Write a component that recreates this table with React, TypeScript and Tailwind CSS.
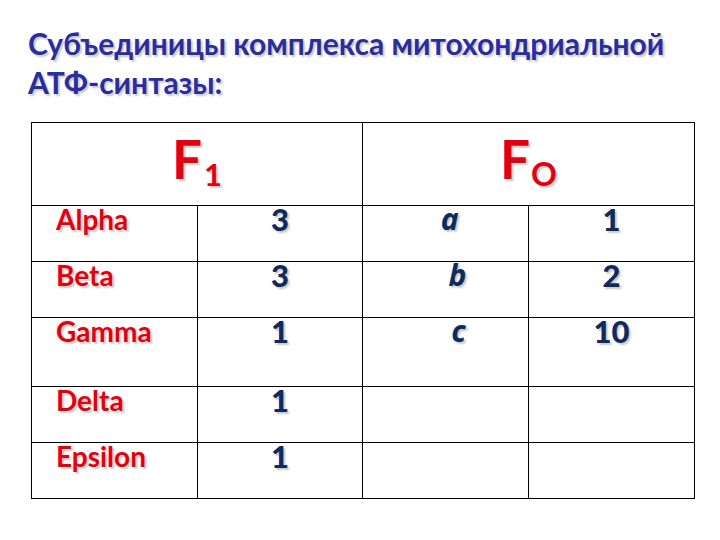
import React from "react";

const shadow = "[text-shadow:2px_2px_2px_rgba(0,0,0,0.22)]";

type Row = {
  name: string;
  f1: string;
  fo?: string;
  foPad?: string;
  count?: string;
  tall?: boolean;
};

const rows: Row[] = [
  { name: "Alpha", f1: "3", fo: "a", foPad: "pl-[8px]", count: "1" },
  { name: "Beta", f1: "3", fo: "b", foPad: "pl-[24px]", count: "2" },
  { name: "Gamma", f1: "1", fo: "c", foPad: "pl-[26px]", count: "10", tall: true },
  { name: "Delta", f1: "1" },
  { name: "Epsilon", f1: "1" },
];

export default function App() {
  return (
    <div className="w-[720px] h-[540px] bg-white overflow-hidden font-['Lato','Noto_Sans',sans-serif]">
      <h1
        className={`pl-[28px] pt-[24px] text-[30px] leading-[39px] font-bold text-[#2b2d9c] ${shadow}`}
      >
        Субъединицы комплекса митохондриальной
        <br />
        АТФ-синтазы:
      </h1>

      <table className="ml-[31px] mt-[20px] w-[664px] border-collapse table-fixed">
        <colgroup>
          <col className="w-[166px]" />
          <col className="w-[165px]" />
          <col className="w-[166px]" />
          <col className="w-[166px]" />
        </colgroup>
        <tbody>
          <tr className="h-[83px]">
            <td colSpan={2} className="border-[1.5px] border-black align-top p-0">
              <div className={`flex justify-center pt-[9px] text-[#e3000f] font-bold leading-none ${shadow}`}>
                <span className="text-[53px] leading-none">F</span>
                <span className="text-[31px] leading-none mt-[27px] ml-[2px]">1</span>
              </div>
            </td>
            <td colSpan={2} className="border-[1.5px] border-black align-top p-0">
              <div className={`flex justify-center pt-[9px] text-[#e3000f] font-bold leading-none ${shadow}`}>
                <span className="text-[53px] leading-none">F</span>
                <span className="text-[32px] leading-none mt-[26px] ml-[1px]">O</span>
              </div>
            </td>
          </tr>
          {rows.map((r) => (
            <tr key={r.name} className={r.tall ? "h-[69px]" : "h-[56px]"}>
              <td className="border-[1.5px] border-black align-top p-0 pl-[24px]">
                <span className={`block -mt-[1px] text-[28px] leading-none font-bold text-[#e3000f] ${shadow}`}>
                  {r.name}
                </span>
              </td>
              <td className="border-[1.5px] border-black align-top p-0 text-center">
                <span className={`block -mt-[2px] text-[31px] leading-none font-black text-[#0f2a5c] ${shadow}`}>
                  {r.f1}
                </span>
              </td>
              <td className={`border-[1.5px] border-black align-top p-0 text-center ${r.foPad ?? ""}`}>
                {r.fo && (
                  <span
                    className={`block -mt-[2px] text-[30px] leading-none font-bold italic text-[#0f2a5c] font-['Noto_Sans',sans-serif] ${shadow}`}
                  >
                    {r.fo}
                  </span>
                )}
              </td>
              <td className="border-[1.5px] border-black align-top p-0 text-center">
                {r.count && (
                  <span className={`block -mt-[2px] text-[31px] leading-none font-black text-[#0f2a5c] ${shadow}`}>
                    {r.count}
                  </span>
                )}
              </td>
            </tr>
          ))}
        </tbody>
      </table>
    </div>
  );
}
